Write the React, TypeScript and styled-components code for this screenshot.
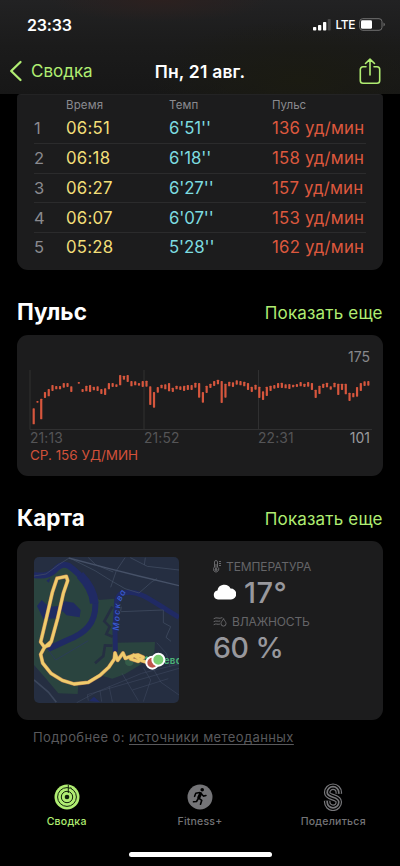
import React from 'react';
import styled, { createGlobalStyle } from 'styled-components';

const GlobalStyle = createGlobalStyle`
  * { box-sizing: border-box; }
  body { margin: 0; background: #000; }
`;

const lime = '#b0ed72';

const Screen = styled.div`
  width: 400px;
  height: 866px;
  overflow: hidden;
  display: flex;
  flex-direction: column;
  background: #000;
  color: #fff;
  font-family: Inter, 'Liberation Sans', sans-serif;
  white-space: nowrap;
`;

const Label = styled.span<{ $size: number; $color?: string; $weight?: number; $spacing?: number }>`
  font-size: ${p => p.$size}px;
  color: ${p => p.$color ?? '#fff'};
  font-weight: ${p => p.$weight ?? 400};
  letter-spacing: ${p => p.$spacing ?? 0}px;
`;

const Header = styled.header`
  height: 94px;
  flex: none;
  background:
    radial-gradient(ellipse 110px 22px at 160px 0, #2c201f, transparent),
    radial-gradient(ellipse 150px 60px at 300px 80px, #1b1b12, transparent),
    linear-gradient(#222223, #1b1b1b 50%, #171717);
`;

const StatusBar = styled.div`
  height: 48px;
  padding: 1px 15px 0 27px;
  display: flex;
  align-items: center;
  justify-content: space-between;
`;

const StatusIcons = styled.div`
  display: flex;
  align-items: center;
  gap: 4px;
`;

const NavBar = styled.div`
  height: 46px;
  padding: 0 9px;
  display: grid;
  grid-template-columns: 1fr auto 1fr;
  align-items: center;
`;

const Back = styled.div`
  display: flex;
  align-items: center;
  gap: 8px;
`;

const Share = styled.div`
  display: flex;
  justify-content: flex-end;
  padding-right: 10px;
`;

const Card = styled.section<{ $height: number }>`
  margin: 0 17px;
  height: ${p => p.$height}px;
  flex: none;
  background: #1c1c1d;
  border-radius: 11px;
`;

const SplitCard = styled(Card)`
  padding: 1px 17px 0;
  border-top: 1px solid #232324;
  border-radius: 4px 4px 11px 11px;
`;

const SplitRow = styled.div<{ $header?: boolean }>`
  display: grid;
  grid-template-columns: 32px 103px 103px auto;
  align-items: center;
  height: ${p => (p.$header ? 18 : 29.8)}px;
  border-bottom: ${p => (p.$header ? 'none' : '1px solid #2b2b2c')};
  &:last-child { border-bottom: none; height: 28px; }
`;

const SectionHead = styled.div`
  height: 65px;
  flex: none;
  padding: 0 17px 8px;
  display: flex;
  align-items: flex-end;
  justify-content: space-between;
`;

const Heading = styled.h2`
  margin: 0 0 2.5px;
  font-size: 22.5px;
  line-height: 27px;
  font-weight: 700;
  letter-spacing: 0.05px;
`;

const MoreLink = styled.span`
  font-size: 17px;
  line-height: 27px;
  letter-spacing: 0.17px;
  margin-right: 0.3px;
  color: ${lime};
`;

const ChartCard = styled(Card)`
  padding: 13px 13px 0 12px;
  display: flex;
  flex-direction: column;
`;

const Peak = styled.div`
  text-align: right;
  height: 20px;
  line-height: 17px;
`;

const TimeAxis = styled.div`
  display: grid;
  grid-template-columns: 114px 114px 1fr auto;
  height: 16px;
  line-height: 16px;
  padding-left: 1px;
`;

const Average = styled.div`
  padding-left: 1px;
  line-height: 16px;
`;

const MapCard = styled(Card)`
  padding: 16px 17px;
  display: flex;
  gap: 34px;
`;

const Weather = styled.div`
  display: flex;
  flex-direction: column;
`;

const Metric = styled.div<{ $height: number; $gap: number }>`
  display: flex;
  align-items: center;
  gap: ${p => p.$gap}px;
  height: ${p => p.$height}px;
`;

const Source = styled.div`
  padding: 7px 33px 0;
  height: 50px;
  line-height: 19px;
  flex: none;
  a { text-decoration: underline; text-underline-offset: 2px; }
`;

const Tabs = styled.nav`
  display: grid;
  grid-template-columns: repeat(3, 133.3px);
  height: 81px;
  flex: none;
  padding-top: 13px;
`;

const Tab = styled.div`
  display: flex;
  flex-direction: column;
  align-items: center;
  gap: 4px;
`;

const HomeBar = styled.div`
  width: 143px;
  height: 5px;
  border-radius: 3px;
  background: #fff;
  margin: 1px auto 0;
`;

const splits = [
  ['06:51', "6'51''", '136'],
  ['06:18', "6'18''", '158'],
  ['06:27', "6'27''", '157'],
  ['06:07', "6'07''", '153'],
  ['05:28', "5'28''", '162'],
];

// Low and high ends of each heart-rate interval, in thirds of a pixel.
const beats: Array<[number, number] | null> = [
  [355,403],[333,338],[326,388],[306,324],[297,319],[285,303],[288,298],[288,298],[279,293],[279,291],
  [289,306],null,[276,281],[297,306],[287,304],[285,306],[290,301],[289,303],[297,312],[295,315],
  [279,298],[279,291],[283,291],[255,286],[257,269],[255,276],[273,289],[274,286],[279,287],[273,291],
  [272,290],[289,345],[306,353],[291,308],[284,295],[283,298],[279,304],[293,306],[287,298],[289,300],
  [287,303],[285,300],[285,300],[278,293],[279,323],[306,338],[287,309],[281,294],[273,288],[269,283],
  [273,339],[281,323],[275,289],[277,291],[271,284],[273,286],[275,289],[279,300],[290,306],[284,299],
  [290,324],[304,330],[290,318],[287,303],[285,296],[279,294],[278,294],[283,295],[282,297],[284,292],
  [282,291],[276,289],[281,291],[276,290],[279,300],[299,324],[287,312],[281,294],[278,292],[289,299],
  [278,292],[281,315],[281,300],[281,313],[308,333],[309,322],[291,320],[279,303],[274,288],[273,287],
];

const BlockSvg = styled.svg`
  display: block;
  flex: none;
`;

const MapSvg = styled(BlockSvg)`
  border-radius: 5px;
`;

const PulseChart = () => (
  <BlockSvg width="343" height="62" viewBox="29 368 343 62">
    <path d="M30 370V429.5H372M144 370V429M258.500 370V429" fill="none" stroke="#303031" strokeWidth="1" />
    {beats.map((b, i) => b && (
      <rect key={i} x={32.6 + i * 3.76} y={290 + b[0] / 3} width="2.200" height={(b[1] - b[0]) / 3} rx=".7" fill="#d6563d" />
    ))}
  </BlockSvg>
);

const track = 'M96 85L124 79L128 92L115 130L98 205L79 274L58 293L47 313L53 339L78 370L112 391L147 402L190 397L225 376L251 352L268 327L270 309L278 331L294 309L301 325L320 318L340 315L355 322L340 334L317 327L326 315L350 332L372 339M96 85L82 127L65 201L47 276L57 290L72 286L79 274';

const RouteMap = () => (
  <MapSvg width="145" height="146" viewBox="27 21 435 438">
    <rect x="27" y="21" width="435" height="438" fill="#252e41" />
    <path d="M27 78L70 70L118 45L150 60L190 105L222 150L268 146L270 235L275 278L390 276L388 310L345 345L300 372L262 386L225 376L160 402L158 432L100 430L62 385L27 345Z" fill="#2a443f" />
    <path d="M27 75Q65 82 88 62Q110 36 132 48C170 75 205 120 211 160C213 220 180 250 128 270L68 298" fill="none" stroke="#202a64" strokeWidth="18" />
    <path d="M165 75C190 100 205 125 208 160" fill="none" stroke="#202a64" strokeWidth="26" />
    <path d="M271 305L270 240L274 165Q276 128 300 128C350 120 385 158 462 202" fill="none" stroke="#202a64" strokeWidth="15" />
    <path d="M36 168L50 150L72 170L102 168L120 154L146 158L167 180L164 202L125 196L111 182L98 205L55 207Z" fill="#202b62" />
    <path d="M64 92L76 84L72 98Z" fill="#202b62" />
    <path d="M262 170L238 214L254 230L244 252L263 260M262 287L240 286L235 318L210 340" fill="none" stroke="#252f42" strokeWidth="8" />
    <path d="M70 300L92 330L190 272" fill="none" stroke="#2a3d58" strokeWidth="3" />
    <g fill="none" stroke="#465167" strokeWidth="2">
      <path d="M138 26L210 62L260 93L300 116L342 129L381 95L396 86M300 23L274 62L257 112M190 23L213 45L265 66M316 23L367 49L462 60M361 23L358 45M288 185L415 180L415 218L437 230L423 262L438 274M27 78L63 72L104 42L131 25M287 184L289 170" />
      <path d="M131 24L250 55L341 78L462 107" strokeWidth="4" />
      <path d="M155 458L215 426L350 370L462 342M190 452L187 434L462 355M225 422L230 455M252 408L262 455M291 370L340 452M322 420L430 386M378 345L408 397L462 435M395 278L424 310L435 350M355 353L377 390L355 455" opacity=".7" />
      <path d="M27 390L70 426L94 457" strokeWidth="5" opacity=".7" />
    </g>
    <path d="M192 453L207 440L225 457Z" fill="#202b66" />
    <text transform="translate(282 242) rotate(-87)" fill="#3a5cd0" fontFamily="Inter, sans-serif" fontSize="26" fontStyle="italic" fontWeight="500" letterSpacing="4">Моск</text>
    <text transform="translate(287 155) rotate(-61)" fill="#3a5cd0" fontFamily="Inter, sans-serif" fontSize="26" fontStyle="italic" fontWeight="500" letterSpacing="3">ва</text>
    <circle cx="313" cy="335" r="13" fill="#345c49" />
    <text x="470" y="343" textAnchor="end" fill="#4bb077" fontFamily="Inter, sans-serif" fontSize="29" fontWeight="700" letterSpacing="1">Филевс</text>
    <path d={track} fill="none" stroke="#b98355" strokeWidth="11.500" strokeLinejoin="round" strokeLinecap="round" />
    <path d={track} fill="none" stroke="#f0cc6c" strokeWidth="8.500" strokeLinejoin="round" strokeLinecap="round" />
    <circle cx="382" cy="338" r="18" fill="#bf554c" stroke="#fff" strokeWidth="6" />
    <circle cx="400" cy="329" r="18" fill="#79ce71" stroke="#fff" strokeWidth="6" />
  </MapSvg>
);

const Thermometer = () => (
  <svg width="8" height="13" viewBox="0 0 8 13" fill="none" stroke="#68686b">
    <path d="M1.500 7V2a1.500 1.500 0 013 0v5a2.700 2.700 0 11-3 0ZM3 4v5M6 1.500h2M6 3.500h2M6 5.500h2" />
    <circle cx="3" cy="9.500" r="1" fill="#68686b" />
  </svg>
);

const Humidity = () => (
  <svg width="14" height="11" viewBox="0 0 14 11" fill="none" stroke="#68686b" strokeLinecap="round">
    <path d="M1 2.500c3-2 5 1 8-.7M1 5.500c2-1.400 4 .4 6-.4M1 8.500c2-1.400 3.500.3 5.500-.3M10.500 3C9 5 8 6.300 8 7.600a2.500 2.500 0 005 0C13 6.300 12 5 10.500 3Z" />
  </svg>
);

const sCurve = 'M15.800 10.800V9.500a5.800 5.800 0 00-11.600 0c0 5.800 11.600 3.700 11.600 9.500a5.800 5.800 0 01-11.600 0v-1.300';

const App = () => (
  <Screen>
    <GlobalStyle />
    <Header>
      <StatusBar>
        <Label $size={16} $weight={600} $spacing={-0.2}>23:33</Label>
        <StatusIcons>
          <svg width="19" height="12" viewBox="0 0 19 12" fill="#fff">
            <rect x="1" y="8" width="3.300" height="3.500" rx=".8" /><rect x="6" y="6" width="3.300" height="5.500" rx=".8" />
            <rect x="11" y="3" width="3.300" height="8.500" rx=".8" /><rect x="15.700" y="0" width="3" height="11.500" rx=".8" fill="#484848" />
          </svg>
          <Label $size={12} $weight={500} $spacing={-0.4}>LTE</Label>
          <svg width="26" height="13" viewBox="0 0 26 13">
            <rect x=".7" y=".7" width="22.300" height="11.600" rx="3" fill="none" stroke="#707070" />
            <rect x="2" y="2.300" width="11" height="8.400" rx="1.300" fill="#fff" /><path d="M24.500 4.500v4q1.300-.5 1.300-2t-1.300-2" fill="#707070" />
          </svg>
        </StatusIcons>
      </StatusBar>
      <NavBar>
        <Back>
          <svg width="14" height="22" viewBox="0 0 14 22"><path d="M11.500 2L2.200 11l9.300 9" fill="none" stroke={lime} strokeWidth="2.300" strokeLinecap="round" strokeLinejoin="round" /></svg>
          <Label $size={17} $color={lime} $spacing={0}>Сводка</Label>
        </Back>
        <Label $size={17.5} $weight={600} $spacing={0.2}>Пн, 21 авг.</Label>
        <Share>
          <svg width="22" height="27" viewBox="0 0 22 27" fill="none" stroke={lime} strokeWidth="1.600" strokeLinecap="round" strokeLinejoin="round">
            <path d="M7 8.800H4a2.700 2.700 0 00-2.700 2.700v11A2.700 2.700 0 004 25.200h14a2.700 2.700 0 002.700-2.700v-11A2.700 2.700 0 0018 8.800h-3M11 17V1.500M6.500 5.500L11 1.200l4.500 4.300" />
          </svg>
        </Share>
      </NavBar>
    </Header>

    <SplitCard $height={176}>
      <SplitRow $header>
        <span />
        <Label $size={11.5} $color="#8a8a8f" $spacing={0.15}>Время</Label>
        <Label $size={11.5} $color="#8a8a8f" $spacing={0.15}>Темп</Label>
        <Label $size={11.5} $color="#8a8a8f" $spacing={0}>Пульс</Label>
      </SplitRow>
      {splits.map(([time, pace, rate], i) => (
        <SplitRow key={time}>
          <Label $size={16.5} $color="#8a8a8f">{i + 1}</Label>
          <Label $size={16.8} $color="#f3df78" $spacing={0.25}>{time}</Label>
          <Label $size={16.8} $color="#7edce0" $spacing={-0.1}>{pace}</Label>
          <Label $size={16.8} $color="#dc583e" $spacing={0.2}>{rate} уд/мин</Label>
        </SplitRow>
      ))}
    </SplitCard>

    <SectionHead>
      <Heading>Пульс</Heading>
      <MoreLink>Показать еще</MoreLink>
    </SectionHead>
    <ChartCard $height={141}>
      <Peak><Label $size={14} $color="#88888c">175</Label></Peak>
      <PulseChart />
      <TimeAxis>
        <Label $size={13.8} $color="#555557" $spacing={0.15}>21:13</Label>
        <Label $size={13.8} $color="#555557" $spacing={0.15}>21:52</Label>
        <Label $size={13.8} $color="#555557" $spacing={0.15}>22:31</Label>
        <Label $size={14} $color="#9a9a9e">101</Label>
      </TimeAxis>
      <Average><Label $size={13.5} $color="#d2513a" $spacing={-0.02}>СР. 156 УД/МИН</Label></Average>
    </ChartCard>

    <SectionHead>
      <Heading>Карта</Heading>
      <MoreLink>Показать еще</MoreLink>
    </SectionHead>
    <MapCard $height={179}>
      <RouteMap />
      <Weather>
        <Metric $height={18} $gap={5}><Thermometer /><Label $size={12} $color="#656568" $spacing={-0.1}>ТЕМПЕРАТУРА</Label></Metric>
        <Metric $height={34} $gap={8}>
          <svg width="23" height="16" viewBox="0 0 23 16"><path d="M5 15.500a4.500 4.500 0 01-.6-8.900A7 7 0 0117.500 4.500 5.500 5.500 0 0118 15.500Z" fill="#fff" /></svg>
          <Label $size={29} $weight={450} $color="#98989d" $spacing={0.5}>17°</Label>
        </Metric>
        <Metric $height={25} $gap={5}><Humidity /><Label $size={12} $color="#656568" $spacing={-0.15}>ВЛАЖНОСТЬ</Label></Metric>
        <Metric $height={27} $gap={0}><Label $size={28.5} $weight={450} $color="#98989d" $spacing={-0.5}>60 %</Label></Metric>
      </Weather>
    </MapCard>
    <Source><Label $size={13} $color="#59595c" $spacing={0.4}>Подробнее о: <a>источники метеоданных</a></Label></Source>

    <Tabs>
      <Tab>
        <svg width="26" height="28" viewBox="0 0 26 28" fill="none">
          <circle cx="13" cy="14" r="12.500" fill={lime} />
          <g stroke="#11200a" strokeWidth="1"><circle cx="13" cy="14" r="9.400" /><circle cx="13" cy="14" r="5.700" /></g>
          <circle cx="13" cy="14" r="2.300" fill="#11200a" />
          <path d="M14.300 2v8M16.500 4.500l1.300 1" stroke="#11200a" />
        </svg>
        <Label $size={10.5} $color={lime} $weight={500} $spacing={0.25}>Сводка</Label>
      </Tab>
      <Tab>
        <svg width="26" height="28" viewBox="0 0 26 28" fill="none">
          <circle cx="13" cy="14" r="12.500" fill="#747477" />
          <circle cx="15.200" cy="6.700" r="1.800" fill="#000" />
          <path d="M14 10.500l2.500 2.600 2.500-.6" stroke="#000" strokeWidth="1.500" strokeLinecap="round" />
          <path d="M13.600 10.700l-1.800 4" stroke="#000" strokeWidth="3.200" strokeLinecap="round" />
          <path d="M12.800 9.500l-4 .8-1.200 3M12 15.300l2.800 2-1.300 4M11 16l-1.500 2.500-3 .3" stroke="#000" strokeWidth="1.600" strokeLinecap="round" strokeLinejoin="round" />
        </svg>
        <Label $size={10.5} $color="#747477" $weight={500} $spacing={0.2}>Fitness+</Label>
      </Tab>
      <Tab>
        <svg width="20" height="28" viewBox="0 0 20 28" fill="none">
          <path d={sCurve} stroke="#77777a" strokeWidth="6.600" />
          <path d={sCurve} stroke="#000" strokeWidth="4.200" />
          <path d={sCurve} stroke="#77777a" strokeWidth="1.700" />
        </svg>
        <Label $size={10.5} $color="#747477" $weight={500} $spacing={0.25}>Поделиться</Label>
      </Tab>
    </Tabs>
    <HomeBar />
  </Screen>
);

export default App;
